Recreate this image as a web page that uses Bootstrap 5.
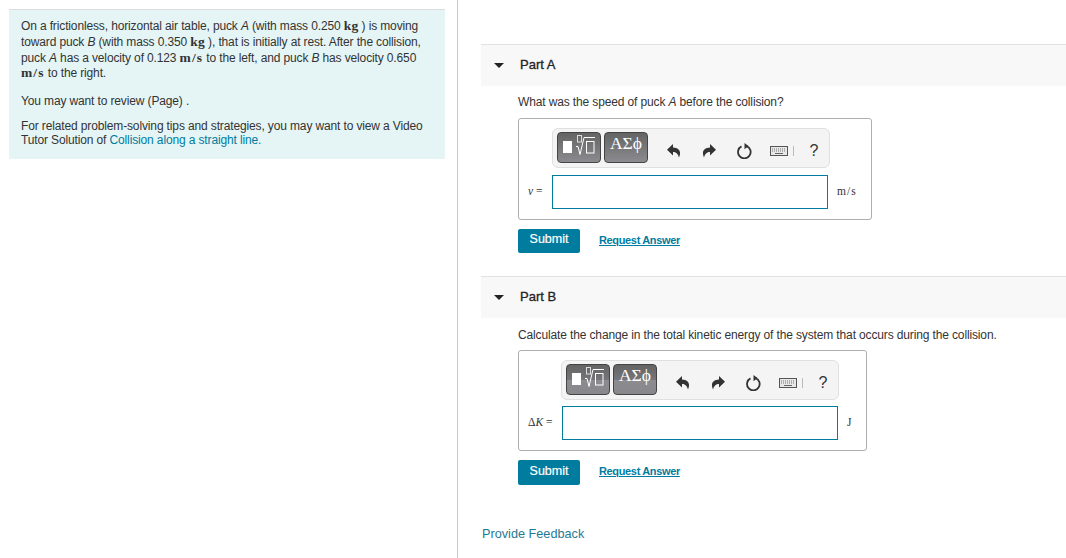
<!DOCTYPE html>
<html lang="en"><head><meta charset="utf-8"><title>Collision</title>
<link href="https://cdn.jsdelivr.net/npm/bootstrap@5.3.0/dist/css/bootstrap.min.css" rel="stylesheet">
<style>
html,body{height:558px;overflow:hidden}
body{font-family:"Liberation Sans",Arial,sans-serif;font-size:12px;letter-spacing:-.135px;color:#333;background:#fff}
.shell{height:558px}
.left-pane{width:458px;flex:none;border-right:1px solid #c9c9c9;padding:9px 12px 0 9px}
.right-pane{flex:1;min-width:0;padding:44px 0 0 23px}
.intro{background:#e5f5f6;border-top:1px solid #ddd;padding:9.4px 12px 0;height:150px;width:436px}
.intro p{margin:0 0 11px;line-height:14px}
.intro p.first{line-height:15.6px;margin-bottom:12.6px}
.intro p:last-child{margin:0}
.mth{font-family:"Liberation Serif",serif;font-weight:700;font-size:13.5px;line-height:1;letter-spacing:.2px}
.mth.wide{letter-spacing:1.1px}
.ital{font-style:italic}
a.tl{color:#007c9f;text-decoration:none}
.part-h{height:42px;background:#f8f8f8;border-top:1px solid #e2e2e2;display:flex;align-items:center;padding-bottom:2px;font-size:13px;letter-spacing:0;color:#222;-webkit-text-stroke:.3px #222}
.caret-i{width:0;height:0;border-left:5px solid transparent;border-right:5px solid transparent;border-top:5px solid #222;margin:2px 16px 0 13px}
.part-b{padding-left:37px}
.ques{line-height:15px;margin:9px 0 8px}
.ques.kq{margin:10px 0 7px}
.ansbox{border:1px solid #aeaeae;border-radius:3px;height:102px;padding:9px 0 0 9px;width:354px}
.ansbox.k{width:349px;height:101px}
.tbar{width:278px;height:40px;margin-left:24px;background:#f4f4f4;border:1px solid #e0e0e0;border-radius:6px;display:flex;align-items:center;padding:0 0 0 4px}
.k .tbar{margin-left:33px}
.mbtn{width:44px;height:31px;border:1px solid #444;border-radius:4px;background:linear-gradient(#646464,#8b8b90);color:#fff;margin-right:3px;display:flex;justify-content:center;align-items:flex-start;padding:0;font-family:"Liberation Serif",serif;font-size:17.5px;letter-spacing:0;line-height:20px;margin-top:-1px}
.k .mbtn{background:linear-gradient(#646464 0,#75757a 50%,#8b8b90 52%,#88888c 100%)}
.tico{display:block;flex:none;margin-top:5px}
.sepx{width:1px;height:10px;background:#bbb;margin:5px 0 0 5px;flex:none}
.qm{font-size:16px;line-height:16px;color:#333;margin:6px 0 0 15.5px}
.ansrow{display:flex;align-items:center;height:34px;margin-top:7px}
.k .ansrow{margin-top:6px}
.lab{width:24px;font-family:"Liberation Serif",serif;font-size:11.5px;letter-spacing:0;color:#333;white-space:nowrap;flex:none}
.k .lab{width:34px}
.lab i{font-style:italic}
.inp{width:276px;height:34px;border:1px solid #007c9f;background:#fff;flex:none;border-radius:0;padding:0}
.unit{font-family:"Liberation Serif",serif;font-size:11.5px;margin-left:9px;color:#333;letter-spacing:1px}
.actions{display:flex;align-items:center;margin-top:9px;height:24px}
.actions.second{height:25px}
.actions.second .req{padding-bottom:3px}
.sub{background:#007c9f;color:#fff;border:0;border-radius:2px;width:62px;height:100%;font-size:12.5px;letter-spacing:0;padding:0 0 3px;-webkit-text-stroke:.2px #fff;line-height:1}
.sub:hover{background:#007c9f;color:#fff}
.req{margin-left:19px;color:#007c9f;font-size:11px;letter-spacing:-.35px;font-weight:700;text-decoration:underline;padding-bottom:1px}
.gap-part{height:23px}
.fb{color:#1f7a96;font-size:12.7px;letter-spacing:0;margin:41px 0 0 -36px;line-height:16px;display:block;text-decoration:none}
</style></head><body>
<svg width="0" height="0" class="position-absolute"><defs>
<symbol id="ib" viewBox="0 0 42 29">
<rect x="5" y="8" width="9" height="12" fill="#fff"/>
<rect x="19.500" y="2.500" width="4" height="6.500" fill="none" stroke="#ddd"/>
<path d="M18 13.500h2l2 8L26 4.500H37" fill="none" stroke="#fff"/>
<rect x="28.500" y="8.500" width="7.500" height="11.500" fill="none" stroke="#fff"/>
</symbol>
<symbol id="iu" viewBox="0 0 14 14"><path d="M6 0 0 5.800l6 5.700V8c3 0 4.700 1.300 6 5.500C14.500 8 12.500 3.600 6 3.500z" fill="#333"/></symbol>
<symbol id="ir" viewBox="0 0 14 14"><path d="M8 0l6 5.800-6 5.700V8c-3 0-4.700 1.300-6 5.500C-.5 8 1.500 3.600 8 3.500z" fill="#333"/></symbol>
<symbol id="il" viewBox="0 0 16 16"><path d="M9.500 3.100a6.300 6.300 0 1 1-5 .3" fill="none" stroke="#333" stroke-width="1.800"/><path d="M7.500 0v6.300l4-3.200z" fill="#333"/></symbol>
<symbol id="ik" viewBox="0 0 18 10"><rect x=".5" y=".5" width="17" height="9" fill="#e8e8e8" stroke="#555"/><path d="M2 3h14M2 5h14" stroke="#777" stroke-dasharray="1 1"/><path d="M5 7.500h8" stroke="#666"/></symbol>
</defs></svg>
<div class="shell d-flex">
<aside class="left-pane">
<div class="intro">
<p class="first">On a frictionless, horizontal air table, puck <span class="ital">A</span> (with mass 0.250 <span class="mth">kg</span> ) is moving toward puck <span class="ital">B</span> (with mass 0.350 <span class="mth">kg</span> ), that is initially at rest. After the collision, puck <span class="ital">A</span> has a velocity of 0.123 <span class="mth wide">m/s</span> to the left, and puck <span class="ital">B</span> has velocity 0.650 <span class="mth wide">m/s</span> to the right.</p>
<p>You may want to review (Page) .</p>
<p>For related problem-solving tips and strategies, you may want to view a Video Tutor Solution of <a class="tl" href="#">Collision along a straight line.</a></p>
</div>
</aside>
<main class="right-pane">
<div class="part-h"><span class="caret-i"></span>Part A</div>
<div class="part-b">
<div class="ques">What was the speed of puck <span class="ital">A</span> before the collision?</div>
<div class="ansbox">
<div class="tbar">
<div class="mbtn"><svg class="tico mt-0" width="42" height="29"><use href="#ib"/></svg></div>
<div class="mbtn">ΑΣϕ</div>
<svg class="tico ms-3" width="14" height="14"><use href="#iu"/></svg>
<svg class="tico" style="margin-left:21px" width="14" height="14"><use href="#ir"/></svg>
<svg class="tico" style="margin-left:21px" width="16" height="16"><use href="#il"/></svg>
<svg class="tico" style="margin-left:17px" width="18" height="10"><use href="#ik"/></svg>
<span class="sepx"></span>
<span class="qm">?</span>
</div>
<div class="ansrow"><span class="lab"><i>v</i> =</span><input class="inp" aria-label="v"><span class="unit">m/s</span></div>
</div>
<div class="actions"><button class="btn sub">Submit</button><a class="req" href="#">Request Answer</a></div>
</div>
<div class="gap-part"></div>
<div class="part-h"><span class="caret-i"></span>Part B</div>
<div class="part-b">
<div class="ques kq">Calculate the change in the total kinetic energy of the system that occurs during the collision.</div>
<div class="ansbox k">
<div class="tbar">
<div class="mbtn"><svg class="tico mt-0" width="42" height="29"><use href="#ib"/></svg></div>
<div class="mbtn">ΑΣϕ</div>
<svg class="tico ms-3" width="14" height="14"><use href="#iu"/></svg>
<svg class="tico" style="margin-left:21px" width="14" height="14"><use href="#ir"/></svg>
<svg class="tico" style="margin-left:21px" width="16" height="16"><use href="#il"/></svg>
<svg class="tico" style="margin-left:17px" width="18" height="10"><use href="#ik"/></svg>
<span class="sepx"></span>
<span class="qm">?</span>
</div>
<div class="ansrow"><span class="lab">Δ<i>K</i> =</span><input class="inp" aria-label="K"><span class="unit">J</span></div>
</div>
<div class="actions second"><button class="btn sub">Submit</button><a class="req" href="#">Request Answer</a></div>
<a class="fb" href="#">Provide Feedback</a>
</div>
</main>
</div>
</body></html>
